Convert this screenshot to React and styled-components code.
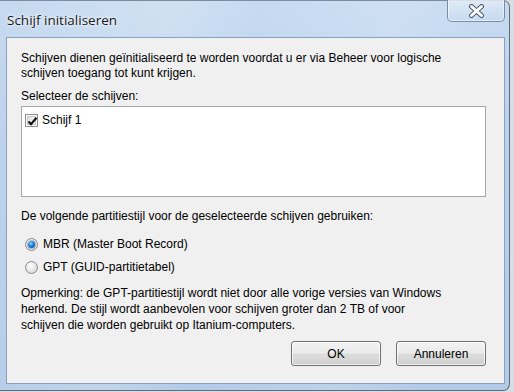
import React from "react";
import styled, { createGlobalStyle } from "styled-components";

const Global = createGlobalStyle`
  html, body { margin: 0; padding: 0; background: #d8dde3; }
  body { width: 514px; height: 392px; overflow: hidden; font-family: "Liberation Sans", Arial, sans-serif; }
`;

const Window = styled.div`
  position: relative;
  box-sizing: border-box;
  width: 511px;
  height: 391px;
  margin-left: -1px;
  border: 1px solid #5d6b7e;
  border-top-color: #7d8ba0;
  border-radius: 0 7px 7px 0;
  background:
    linear-gradient(100deg, rgba(255,255,255,0) 0%, rgba(255,255,255,0.18) 30%, rgba(255,255,255,0) 45%, rgba(255,255,255,0.15) 70%, rgba(255,255,255,0) 85%),
    linear-gradient(180deg, #c6daf0 0%, #b9d1eb 40%, #b2cbe8 100%);
  display: flex;
  flex-direction: column;
  padding: 0 4px 6px 6px;
`;

const TitleBar = styled.div`
  height: 36px;
  display: flex;
  align-items: flex-start;
  justify-content: space-between;
`;

const Title = styled.div`
  padding-top: 10px;
  padding-left: 1px;
  font-family: "Open Sans", "Noto Sans", sans-serif;
  font-size: 13.5px;
  color: #1a1a1a;
  text-shadow: 0 0 6px rgba(255,255,255,0.9), 0 0 3px rgba(255,255,255,0.9);
`;

const CloseButton = styled.div`
  width: 58px;
  height: 22px;
  margin-top: -1px;
  box-sizing: border-box;
  border: 1px solid #7c8ca2;
  border-top: none;
  border-radius: 0 0 5px 5px;
  background: linear-gradient(180deg, rgba(255,255,255,0.45) 0%, rgba(255,255,255,0.2) 50%, rgba(200,220,240,0.25) 100%);
  box-shadow: inset 0 0 0 1px rgba(255,255,255,0.5);
  display: flex;
  align-items: center;
  justify-content: center;
`;

const Client = styled.div`
  flex: 1;
  box-sizing: border-box;
  border: 1px solid #8aa0bc;
  background: #f0f0f0;
  padding: 13px 18px 0 14px;
  display: flex;
  flex-direction: column;
  font-size: 12px;
  color: #000;
`;

const Text = styled.div`
  line-height: ${(p) => p.$lh || 15}px;
  margin-top: ${(p) => p.$mt || 0}px;
  white-space: nowrap;
`;

const ListBox = styled.div`
  margin-top: 2px;
  height: 91px;
  width: 465px;
  box-sizing: border-box;
  border: 1px solid #a5a8ad;
  background: #fff;
  padding: 5px 3px;
`;

const Row = styled.div`
  display: flex;
  align-items: center;
  gap: ${(p) => p.$gap || 4}px;
  height: ${(p) => p.$h || 16}px;
  margin-top: ${(p) => p.$mt || 0}px;
  padding-left: ${(p) => p.$pl || 0}px;
`;

const Box = styled.span`
  width: 13px;
  height: 13px;
  box-sizing: border-box;
  border: 1px solid #8e8f8f;
  background: #fff;
  padding: 1px;
  display: inline-flex;
  position: relative;
`;

const BoxInner = styled.span`
  flex: 1;
  background: linear-gradient(135deg, #dcdcdc 0%, #f4f4f4 60%, #fafafa 100%);
  border: 1px solid #c8c8c8;
`;

const Check = styled.svg`
  position: absolute;
  left: 1px;
  top: 1px;
`;

const Radio = styled.span`
  width: 13px;
  height: 13px;
  box-sizing: border-box;
  border-radius: 50%;
  border: 1px solid #8b8b8b;
  background: radial-gradient(circle at 40% 35%, #ffffff 0%, #e6e6e6 50%, #cfcfcf 100%);
  display: inline-flex;
  align-items: center;
  justify-content: center;
`;

const Dot = styled.span`
  width: 7px;
  height: 7px;
  border-radius: 50%;
  background: radial-gradient(circle at 40% 35%, #8ad0ff 0%, #1b7fd6 45%, #0b3d7c 100%);
  box-shadow: 0 0 0 1px rgba(40,90,150,0.35);
`;

const Buttons = styled.div`
  margin-top: 8px;
  display: flex;
  justify-content: flex-end;
  gap: 15px;
`;

const Button = styled.div`
  width: 90px;
  height: 25px;
  box-sizing: border-box;
  border: 1px solid #707070;
  border-radius: 3px;
  background: linear-gradient(180deg, #f2f2f2 0%, #ebebeb 48%, #dddddd 52%, #cfcfcf 100%);
  box-shadow: inset 0 0 0 1px rgba(255,255,255,0.7);
  display: flex;
  align-items: center;
  justify-content: center;
  font-size: 12px;
  color: #000;
`;

export default function App() {
  return (
    <>
      <Global />
      <Window>
        <TitleBar>
          <Title>Schijf initialiseren</Title>
          <CloseButton>
            <svg width="17" height="14" viewBox="0 0 17 14">
              <path d="M3.5 2.5 L13.5 11.5 M13.5 2.5 L3.5 11.5" stroke="#4f5d70" strokeWidth="5" strokeLinecap="round" />
              <path d="M3.5 2.5 L13.5 11.5 M13.5 2.5 L3.5 11.5" stroke="#ffffff" strokeWidth="3" strokeLinecap="round" />
            </svg>
          </CloseButton>
        </TitleBar>
        <Client>
          <Text>Schijven dienen geïnitialiseerd te worden voordat u er via Beheer voor logische</Text>
          <Text>schijven toegang tot kunt krijgen.</Text>
          <Text $mt={8}>Selecteer de schijven:</Text>
          <ListBox>
            <Row $gap={4}>
              <Box>
                <BoxInner />
                <Check width="11" height="11" viewBox="0 0 11 11">
                  <path d="M1.5 5.5 L4 8.2 L9.5 1.8" stroke="#111" strokeWidth="2.2" fill="none" />
                </Check>
              </Box>
              <span>Schijf 1</span>
            </Row>
          </ListBox>
          <Text $mt={12}>De volgende partitiestijl voor de geselecteerde schijven gebruiken:</Text>
          <Row $mt={11} $h={18} $pl={4} $gap={5}>
            <Radio><Dot /></Radio>
            <span>MBR (Master Boot Record)</span>
          </Row>
          <Row $mt={5} $h={18} $pl={4} $gap={5}>
            <Radio />
            <span>GPT (GUID-partitietabel)</span>
          </Row>
          <Text $mt={9} $lh={16}>Opmerking: de GPT-partitiestijl wordt niet door alle vorige versies van Windows</Text>
          <Text $lh={16}>herkend. De stijl wordt aanbevolen voor schijven groter dan 2 TB of voor</Text>
          <Text $lh={16}>schijven die worden gebruikt op Itanium-computers.</Text>
          <Buttons>
            <Button>OK</Button>
            <Button>Annuleren</Button>
          </Buttons>
        </Client>
      </Window>
    </>
  );
}
